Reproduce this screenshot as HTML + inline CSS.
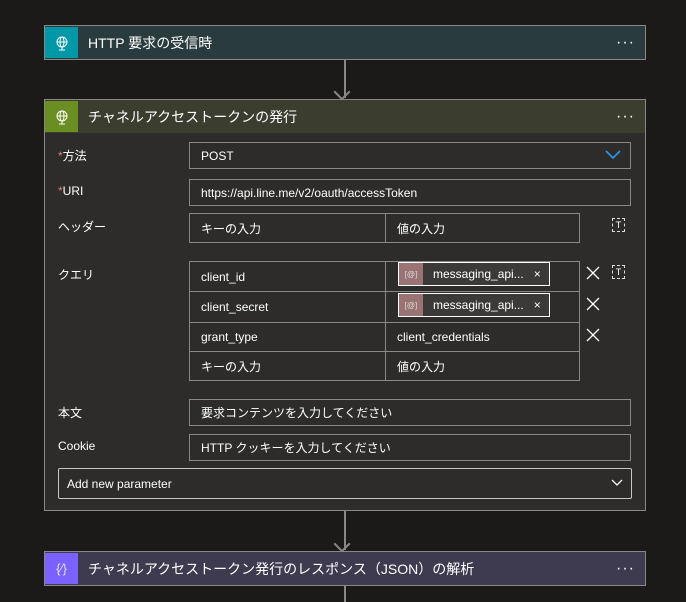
<!DOCTYPE html><html><head><meta charset="utf-8"><style>
*{box-sizing:border-box;margin:0;padding:0}
body{width:686px;height:602px;background:#1b1a19;font-family:"Liberation Sans","Noto Sans CJK JP",sans-serif;color:#fff;position:relative;overflow:hidden;font-size:12px}
.abs{position:absolute}
.card{position:absolute;left:44px;width:602px;border:1px solid #8a8886}
.hd{height:33px;display:flex;align-items:center;font-size:14px}
.ic{width:33px;height:31px;display:flex;align-items:center;justify-content:center}
.ttl{margin-left:10px;flex:1}
.dots{margin-right:10px;font-size:16px;letter-spacing:1px}
.in{position:absolute;border:1px solid #8a8886;height:27px;padding-left:11px;display:flex;align-items:center;font-size:12px;background:#2d2c2b}
.lbl{position:absolute;left:58px;font-size:12px}
.req{color:#e37d80}
.line{position:absolute;left:344px;width:2px;background:#8a8886}
.tok{position:absolute;height:24px;border:1px solid #fff;background:#3b3a39;display:flex;align-items:center;font-size:12px}
.tok .t{width:24px;height:22px;background:#9a7474;color:#ddd;font-size:8px;display:flex;align-items:center;justify-content:center}
.x{position:absolute}
</style></head><body>
<div class="line" style="top:58px;height:40px"></div>
<div class="abs" style="left:336px;top:86px;width:12px;height:12px;border-right:2px solid #8a8886;border-bottom:2px solid #8a8886;transform:rotate(45deg)"></div>
<div class="line" style="top:510px;height:40px"></div>
<div class="abs" style="left:336px;top:538px;width:12px;height:12px;border-right:2px solid #8a8886;border-bottom:2px solid #8a8886;transform:rotate(45deg)"></div>
<div class="line" style="top:585px;height:17px"></div>

<div class="card" style="top:25px;background:#2a3b3e"><div class="hd"><div class="ic" style="background:#0097a7"><svg width="16" height="16" viewBox="0 0 16 16" fill="none" stroke="#fff" stroke-width="1"><circle cx="8" cy="7" r="5"/><ellipse cx="8" cy="7" rx="2" ry="5"/><path d="M3 7h10M8 12v3M5 15h6"/></svg></div><div class="ttl">HTTP 要求の受信時</div><div class="dots">···</div></div></div>

<div class="card" style="top:99px;height:412px;background:#2d2c2b"><div class="hd" style="background:#3b3d2f"><div class="ic" style="background:#6b8e23"><svg width="16" height="16" viewBox="0 0 16 16" fill="none" stroke="#fff" stroke-width="1"><circle cx="8" cy="7" r="5"/><ellipse cx="8" cy="7" rx="2" ry="5"/><path d="M3 7h10M8 12v3M5 15h6"/></svg></div><div class="ttl">チャネルアクセストークンの発行</div><div class="dots">···</div></div></div>

<div class="lbl" style="top:147px"><span class="req">*</span>方法</div>
<div class="in" style="left:189px;top:142px;width:442px">POST</div>
<svg class="abs" style="left:605px;top:150px" width="16" height="10"><path d="M1 1l7 7 7-7" stroke="#2899f5" stroke-width="1.6" fill="none"/></svg>
<div class="lbl" style="top:184px"><span class="req">*</span>URI</div>
<div class="in" style="left:189px;top:179px;width:442px">https://api.line.me/v2/oauth/accessToken</div>
<div class="lbl" style="top:218px">ヘッダー</div>
<div class="in" style="left:189px;top:213px;width:197px;height:30px">キーの入力</div>
<div class="in" style="left:385px;top:213px;width:195px;height:30px">値の入力</div>
<div class="abs" style="left:612px;top:218px;width:13px;height:14px;border:1px dashed #ddd;font-size:9px;text-align:center;line-height:12px">T</div>
<div class="lbl" style="top:266px">クエリ</div>
<div class="in" style="left:189px;top:261px;width:197px;height:31px">client_id</div>
<div class="in" style="left:385px;top:261px;width:195px;height:31px"></div>
<div class="in" style="left:189px;top:291px;width:197px;height:32px">client_secret</div>
<div class="in" style="left:385px;top:291px;width:195px;height:32px"></div>
<div class="in" style="left:189px;top:322px;width:197px;height:30px">grant_type</div>
<div class="in" style="left:385px;top:322px;width:195px;height:30px">client_credentials</div>
<div class="in" style="left:189px;top:351px;width:197px;height:30px">キーの入力</div>
<div class="in" style="left:385px;top:351px;width:195px;height:30px">値の入力</div>
<div class="tok" style="left:398px;top:262px;width:152px"><div class="t">[@]</div><span style="margin-left:10px">messaging_api...</span><span style="margin-left:10px">×</span></div>
<div class="tok" style="left:398px;top:293px;width:152px"><div class="t">[@]</div><span style="margin-left:10px">messaging_api...</span><span style="margin-left:10px">×</span></div>
<svg class="x" style="left:586px;top:266px" width="14" height="14"><path d="M1 1l12 12M13 1L1 13" stroke="#fff" stroke-width="1.3"/></svg>
<svg class="x" style="left:586px;top:297px" width="14" height="14"><path d="M1 1l12 12M13 1L1 13" stroke="#fff" stroke-width="1.3"/></svg>
<svg class="x" style="left:586px;top:328px" width="14" height="14"><path d="M1 1l12 12M13 1L1 13" stroke="#fff" stroke-width="1.3"/></svg>
<div class="abs" style="left:612px;top:265px;width:13px;height:14px;border:1px dashed #ddd;font-size:9px;text-align:center;line-height:12px">T</div>
<div class="lbl" style="top:404px">本文</div>
<div class="in" style="left:189px;top:399px;width:442px">要求コンテンツを入力してください</div>
<div class="lbl" style="top:439px">Cookie</div>
<div class="in" style="left:189px;top:434px;width:442px">HTTP クッキーを入力してください</div>
<div class="in" style="left:58px;top:468px;width:574px;height:31px;border-color:#c8c6c4;border-radius:2px;padding-left:8px">Add new parameter</div>
<svg class="abs" style="left:611px;top:479px" width="12" height="8"><path d="M1 1l5 5 5-5" stroke="#fff" stroke-width="1.3" fill="none"/></svg>

<div class="card" style="top:551px;background:#3e3a4f"><div class="hd"><div class="ic" style="background:#7b61ff;color:#ddd;font-size:13px">{⁄}</div><div class="ttl">チャネルアクセストークン発行のレスポンス（JSON）の解析</div><div class="dots">···</div></div></div>
</body></html>
